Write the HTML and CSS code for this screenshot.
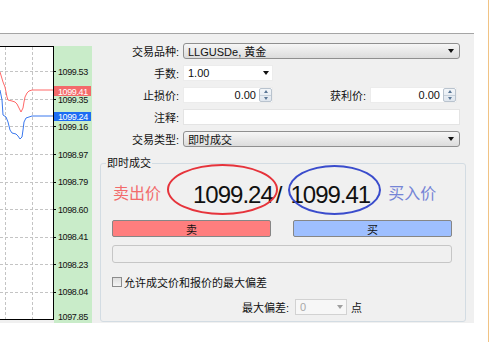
FILE: index.html
```html
<!DOCTYPE html>
<html lang="zh-CN">
<head>
    <meta charset="UTF-8">
    <title>新订单</title>
    <link rel="stylesheet" href="styles.css">
</head>
<body>
    <div class="page">
        <div class="terminal">
            <!-- tick chart -->
            <div class="chart">
                <svg width="92" height="277" viewBox="0 0 92 277">
                    <rect x="-2" y="0.5" width="55.5" height="273" fill="#fff" stroke="#000" stroke-width="1"/>
                    <rect x="54" y="0" width="38" height="277" fill="#c9ecc9"/>
                    <g stroke="#c4c4c4" stroke-dasharray="3 2" stroke-width="1">
                        <line x1="0" y1="25.5" x2="53" y2="25.5"/>
                        <line x1="0" y1="53.5" x2="53" y2="53.5"/>
                        <line x1="0" y1="80.5" x2="53" y2="80.5"/>
                        <line x1="0" y1="108.5" x2="53" y2="108.5"/>
                        <line x1="0" y1="136.5" x2="53" y2="136.5"/>
                        <line x1="0" y1="163.5" x2="53" y2="163.5"/>
                        <line x1="0" y1="191.5" x2="53" y2="191.5"/>
                        <line x1="0" y1="218.5" x2="53" y2="218.5"/>
                        <line x1="0" y1="246.5" x2="53" y2="246.5"/>
                        <line x1="5.5" y1="1" x2="5.5" y2="273"/>
                        <line x1="32.5" y1="1" x2="32.5" y2="273"/>
                    </g>
                    <g stroke="#000" stroke-width="1">
                        <line x1="53" y1="25.5" x2="56" y2="25.5"/>
                        <line x1="53" y1="53.5" x2="56" y2="53.5"/>
                        <line x1="53" y1="80.5" x2="56" y2="80.5"/>
                        <line x1="53" y1="108.5" x2="56" y2="108.5"/>
                        <line x1="53" y1="136.5" x2="56" y2="136.5"/>
                        <line x1="53" y1="163.5" x2="56" y2="163.5"/>
                        <line x1="53" y1="191.5" x2="56" y2="191.5"/>
                        <line x1="53" y1="218.5" x2="56" y2="218.5"/>
                        <line x1="53" y1="246.5" x2="56" y2="246.5"/>
                    </g>
                    <polyline fill="none" stroke="#ff6868" stroke-width="1"
                        points="0,26 3,36 5,41 7,51 8,54 12,55 15,56 17,58 19,62 21,66 23,62 24,56 25,51 27,47 29,45 32,44 53,44"/>
                    <polyline fill="none" stroke="#3a78ee" stroke-width="1"
                        points="0,44 2,54 3,69 6,71 8,76 10,84 12,87 16,88 18,90 20,93 22,91 23,84 24,76 26,72 29,71 32,70 53,70"/>
                    <g class="axis-text">
                        <text x="58" y="29">1099.53</text>
                        <text x="58" y="57">1099.35</text>
                        <text x="58" y="84">1099.16</text>
                        <text x="58" y="112">1098.97</text>
                        <text x="58" y="139">1098.79</text>
                        <text x="58" y="167">1098.60</text>
                        <text x="58" y="194">1098.41</text>
                        <text x="58" y="222">1098.23</text>
                        <text x="58" y="249">1098.04</text>
                        <text x="58" y="274">1097.85</text>
                    </g>
                    <rect x="54" y="40" width="37" height="10" fill="#f36a6a"/>
                    <text class="axis-text" x="58" y="48.5" fill="#fff">1099.41</text>
                    <rect x="54" y="66" width="37" height="9" fill="#1c6df3"/>
                    <text class="axis-text" x="58" y="74" fill="#fff">1099.24</text>
                </svg>
            </div>

            <!-- order form -->
            <div class="order">
                <div class="row">
                    <label>交易品种:</label>
                    <div class="select">LLGUSDe, 黄金<span class="arrow"></span></div>
                </div>
                <div class="row">
                    <label>手数:</label>
                    <div class="combo">1.00<span class="arrow"></span></div>
                </div>
                <div class="row row-sl">
                    <label>止损价:</label>
                    <div class="spin"><span class="val">0.00</span><span class="spin-btn"><i class="up"></i><i class="down"></i></span></div>
                    <label class="lbl-tp">获利价:</label>
                    <div class="spin spin-tp"><span class="val">0.00</span><span class="spin-btn"><i class="up"></i><i class="down"></i></span></div>
                </div>
                <div class="row">
                    <label>注释:</label>
                    <div class="text-input"></div>
                </div>
                <div class="row">
                    <label>交易类型:</label>
                    <div class="select">即时成交<span class="arrow"></span></div>
                </div>

                <fieldset class="group">
                    <legend>即时成交</legend>
                    <div class="quote">
                        <span class="side sell">卖出价</span>
                        <span class="price bid">1099.24</span>
                        <span class="slash">/</span>
                        <span class="price ask">1099.41</span>
                        <span class="side buy">买入价</span>
                        <span class="mark mark-bid"></span>
                        <span class="mark mark-ask"></span>
                    </div>
                    <div class="actions">
                        <button class="btn-sell">卖</button>
                        <button class="btn-buy">买</button>
                    </div>
                    <div class="progress"></div>
                    <label class="check"><span class="box"></span>允许成交价和报价的最大偏差</label>
                    <div class="deviation">
                        <span>最大偏差:</span>
                        <div class="combo disabled">0<span class="arrow"></span></div>
                        <span class="unit">点</span>
                    </div>
                </fieldset>
            </div>
        </div>
    </div>
</body>
</html>
```
FILE: styles.css
```css
* {
    box-sizing: border-box;
    margin: 0;
    padding: 0;
}

body {
    background: #fff;
    font-family: 'Liberation Sans', 'Noto Sans CJK SC', sans-serif;
    font-size: 11px;
    color: #111;
}

.page {
    width: 489px;
    height: 342px;
    padding-top: 33px;
    border-right: 1px solid #f1c384;
}

.terminal {
    width: 474px;
    height: 290px;
    display: flex;
    background: #f0f0f0;
    border-top: 1px solid #a5a5a5;
}

.chart {
    width: 92px;
    padding-top: 12px;
}

.chart svg {
    display: block;
}

.axis-text,
.axis-text text {
    font-family: 'Liberation Sans', sans-serif;
    font-size: 9px;
    letter-spacing: -0.4px;
    fill: #111;
}

text.axis-text {
    fill: #fff;
}

.order {
    width: 376px;
    margin-left: 5px;
    padding-top: 6px;
}

.row {
    display: flex;
    align-items: center;
    height: 22px;
    margin-right: 13px;
}

.row label {
    width: 86px;
    padding-right: 4px;
    text-align: right;
}

.select,
.combo,
.spin,
.text-input {
    height: 16px;
    display: flex;
    align-items: center;
}

.select {
    flex: 1;
    padding-left: 4px;
    border: 1px solid #8f8f8f;
    border-radius: 3px;
    background: linear-gradient(#f6f6f6, #dcdcdc);
}

.arrow {
    margin-left: auto;
    margin-right: 5px;
    border-left: 3.5px solid transparent;
    border-right: 3.5px solid transparent;
    border-top: 4px solid #111;
}

.combo {
    width: 90px;
    padding-left: 4px;
    background: #fff;
    border: 1px solid #ececec;
}

.combo .arrow {
    margin-right: 3px;
}

.spin {
    width: 90px;
    background: #fff;
    border: 1px solid #ececec;
    justify-content: flex-end;
}

.spin .val {
    padding-right: 3px;
}

.spin-btn {
    width: 13px;
    height: 14px;
    display: flex;
    flex-direction: column;
    border: 1px solid #b9c3ce;
    border-radius: 2px;
    background: linear-gradient(#f3f6f9, #dfe6ee);
}

.spin-btn i {
    flex: 1;
    display: flex;
    align-items: center;
    justify-content: center;
}

.spin-btn i::after {
    content: '';
    border-left: 2.5px solid transparent;
    border-right: 2.5px solid transparent;
}

.spin-btn .up::after {
    border-bottom: 3px solid #5a7796;
}

.spin-btn .down {
    border-top: 1px solid #c6d0da;
}

.spin-btn .down::after {
    border-top: 3px solid #5a7796;
}

.row .lbl-tp {
    flex: 1;
    width: auto;
}

.spin-tp {
    width: 87px;
    margin-right: 3px;
}

.text-input {
    flex: 1;
    background: #fff;
    border: 1px solid #e4e4e4;
}

.group {
    margin: 7px 7px 0 3px;
    padding: 0 13px 6px 11px;
    border: 1px solid #d3dce3;
    border-radius: 3px;
}

.group legend {
    margin-left: -6px;
    padding: 0 1px;
    font-size: 11px;
    line-height: 12px;
}

.quote {
    position: relative;
    height: 46px;
    display: flex;
    align-items: center;
}

.side {
    font-size: 16px;
}

.sell {
    margin-left: 1px;
    color: #f26b6b;
}

.buy {
    margin-left: 18px;
    color: #7584d6;
}

.price {
    padding-top: 6px;
    font-size: 24px;
    letter-spacing: -1px;
    color: #111;
}

.bid {
    margin-left: 32px;
}

.slash {
    margin-left: 3px;
    padding-top: 6px;
    font-size: 24px;
}

.ask {
    margin-left: 8px;
}

.mark {
    position: absolute;
    border-radius: 50%;
    border: 2px solid;
}

.mark-bid {
    left: 55px;
    top: -5px;
    width: 111px;
    height: 51px;
    border-color: #e6333b;
}

.mark-ask {
    left: 176px;
    top: -4px;
    width: 93px;
    height: 50px;
    border-color: #3a4ccc;
}

.actions {
    display: grid;
    grid-template-columns: 1fr 1fr;
    gap: 22px;
    margin-top: 5px;
}

.actions button {
    height: 17px;
    border: 1px solid #868686;
    border-radius: 2px;
    font-family: 'Noto Sans CJK SC', sans-serif;
    font-size: 11px;
    color: #111;
}

.btn-sell {
    background: #ff7e7e;
}

.btn-buy {
    background: #9ebfff;
}

.progress {
    height: 18px;
    margin-top: 8px;
    border: 1px solid #c6c6c6;
    border-radius: 3px;
    background: #f0f0f0;
}

.check {
    display: flex;
    align-items: center;
    height: 12px;
    margin-top: 13px;
}

.check .box {
    width: 10px;
    height: 10px;
    margin-right: 2px;
    border: 1px solid #8c8c8c;
    background: linear-gradient(#dedede, #f4f4f4);
}

.deviation {
    display: flex;
    align-items: center;
    height: 16px;
    margin-top: 11px;
    padding-left: 130px;
}

.combo.disabled {
    width: 52px;
    margin-left: 6px;
    color: #a9a9a9;
    background: #f7f7f7;
    border-color: #d2d2d2;
}

.combo.disabled .arrow {
    border-top-color: #a0a0a0;
}

.unit {
    margin-left: 4px;
}
```
